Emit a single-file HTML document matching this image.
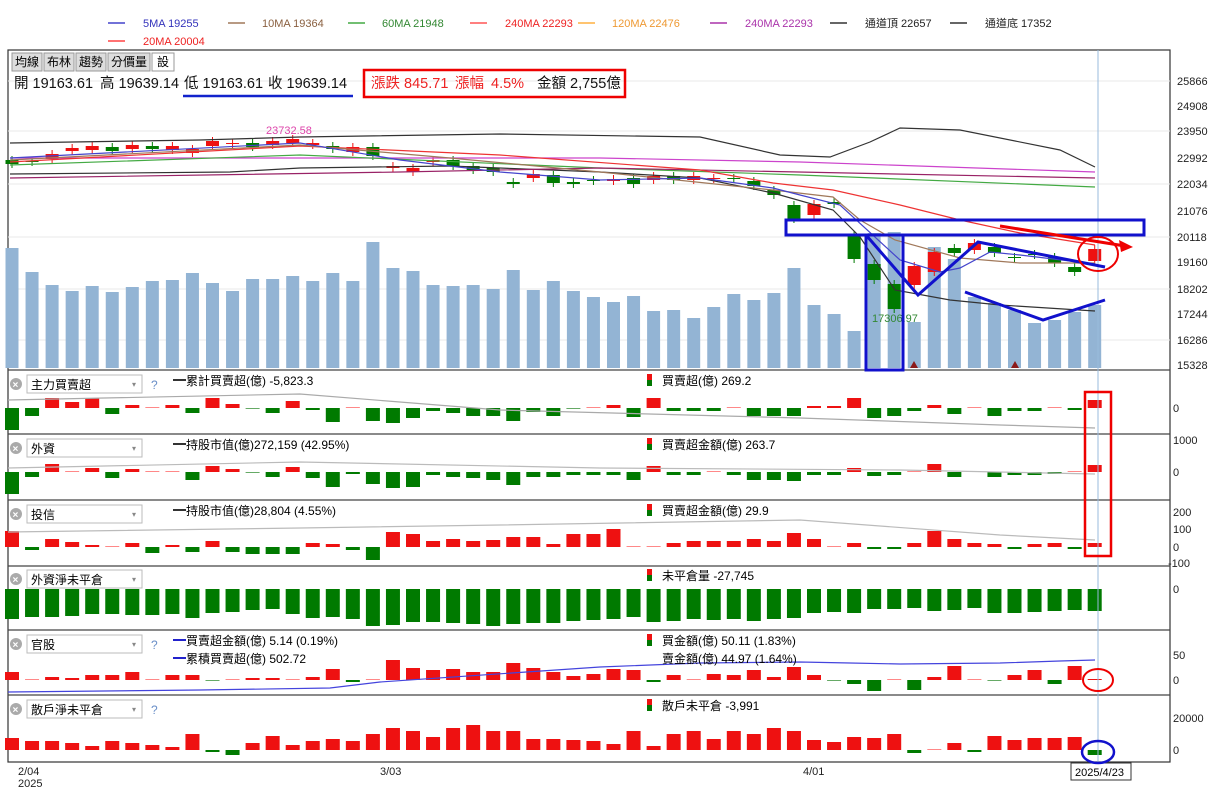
<!DOCTYPE html>
<html><head><meta charset="utf-8"><style>
body{margin:0;background:#fff;width:1229px;height:787px;overflow:hidden;font-family:"Liberation Sans","Noto Sans CJK TC",sans-serif;}
svg text{font-family:"Liberation Sans","Noto Sans CJK TC",sans-serif;}
</style></head><body>
<svg id="s" width="1229" height="787" xmlns="http://www.w3.org/2000/svg" font-size="12">
<!-- legend -->
<g font-size="11">
<line x1="108" y1="23" x2="125" y2="23" stroke="#4444cc" stroke-width="1.5"/><text x="143" y="27" fill="#3333bb">5MA 19255</text>
<line x1="228" y1="23" x2="245" y2="23" stroke="#a0785a" stroke-width="1.5"/><text x="262" y="27" fill="#8a6040">10MA 19364</text>
<line x1="348" y1="23" x2="365" y2="23" stroke="#44aa44" stroke-width="1.5"/><text x="382" y="27" fill="#338833">60MA 21948</text>
<line x1="470" y1="23" x2="487" y2="23" stroke="#ff5555" stroke-width="1.5"/><text x="505" y="27" fill="#ee2222">240MA 22293</text>
<line x1="578" y1="23" x2="595" y2="23" stroke="#ffb040" stroke-width="1.5"/><text x="612" y="27" fill="#ee9933">120MA 22476</text>
<line x1="710" y1="23" x2="727" y2="23" stroke="#aa33aa" stroke-width="1.5"/><text x="745" y="27" fill="#aa33aa">240MA 22293</text>
<line x1="830" y1="23" x2="847" y2="23" stroke="#333" stroke-width="1.5"/><text x="865" y="27" fill="#222">通道頂 22657</text>
<line x1="950" y1="23" x2="967" y2="23" stroke="#333" stroke-width="1.5"/><text x="985" y="27" fill="#222">通道底 17352</text>
<line x1="108" y1="41" x2="125" y2="41" stroke="#ff4444" stroke-width="1.5"/><text x="143" y="45" fill="#ee2222">20MA 20004</text>
</g>
<!-- frame -->
<rect x="8" y="50" width="1162" height="712" fill="none" stroke="#333" stroke-width="1.2"/>
<g stroke="#444" stroke-width="1.2">
<line x1="8" y1="370" x2="1170" y2="370"/><line x1="8" y1="434" x2="1170" y2="434"/><line x1="8" y1="500" x2="1170" y2="500"/><line x1="8" y1="566" x2="1170" y2="566"/><line x1="8" y1="630" x2="1170" y2="630"/><line x1="8" y1="695" x2="1170" y2="695"/>
</g>
<g stroke="#e8e8e8" stroke-width="1">
<line x1="8" y1="81" x2="1170" y2="81"/><line x1="8" y1="131" x2="1170" y2="131"/><line x1="8" y1="184" x2="1170" y2="184"/><line x1="8" y1="237" x2="1170" y2="237"/><line x1="8" y1="289" x2="1170" y2="289"/><line x1="8" y1="340" x2="1170" y2="340"/>
</g>
<g id="bars"></g>
<g id="lines" fill="none" stroke-width="1.2">
<polyline stroke="#333" points="10,143 200,140 300,137 500,134 700,137 780,155 830,157 870,142 900,128 960,130 1060,150 1095,167"/>
<polyline stroke="#333" points="10,174 230,172 300,168 450,166 600,172 700,178 773,193 833,210 860,237 895,290 950,300 1000,305 1095,311"/>
<polyline stroke="#cc44cc" points="10,158 600,158 800,162 1095,172"/>
<polyline stroke="#44aa44" points="10,165 300,155 600,168 800,175 1095,187"/>
<polyline stroke="#992266" points="10,178 400,172 600,168 1095,178"/>
<polyline stroke="#ee3333" points="10,162 300,146 500,155 700,170 773,183 833,190 900,205 960,220 1020,233 1095,245"/>
<polyline stroke="#a0785a" points="10,160 300,145 450,158 600,172 773,190 833,197 860,220 895,240 960,258 1020,263 1095,263"/>
<polyline stroke="#4444cc" points="10,158 300,143 400,160 500,172 600,180 700,178 773,188 800,195 840,205 900,260 940,272 960,268 990,252 1020,255 1095,264"/>
<polyline stroke="#aaa" points="8,400 300,394 500,410 800,418 1000,425 1095,428"/>
<polyline stroke="#bbb" points="8,468 300,462 600,468 900,470 1095,474"/>
<polyline stroke="#bbb" points="8,532 300,528 500,525 800,520 1000,535 1095,540"/>
<polyline stroke="#4444dd" points="8,692 200,690 330,688 380,682 600,667 700,663 800,662 850,663 900,664 1000,663 1060,661 1095,660"/>
</g>
<line x1="1098" y1="50" x2="1098" y2="770" stroke="#99bbdd" stroke-width="1"/>
<text x="266" y="134" fill="#dd44aa" font-size="11">23732.58</text>
<text x="872" y="322" fill="#338833" font-size="11">17306.97</text>
<polygon points="910,368 914,361 918,368" fill="#8b1a1a"/><polygon points="1011,368 1015,361 1019,368" fill="#8b1a1a"/>
<!-- axis -->
<g font-size="11" fill="#222">
<text x="1177" y="85">25866</text><text x="1177" y="110">24908</text><text x="1177" y="135">23950</text><text x="1177" y="162">22992</text><text x="1177" y="188">22034</text><text x="1177" y="215">21076</text><text x="1177" y="241">20118</text><text x="1177" y="266">19160</text><text x="1177" y="293">18202</text><text x="1177" y="318">17244</text><text x="1177" y="344">16286</text><text x="1177" y="369">15328</text>
<text x="1173" y="412">0</text><text x="1173" y="444">1000</text><text x="1173" y="476">0</text>
<text x="1173" y="516">200</text><text x="1173" y="533">100</text><text x="1173" y="551">0</text><text x="1168" y="567">-100</text>
<text x="1173" y="593">0</text><text x="1173" y="659">50</text><text x="1173" y="684">0</text><text x="1173" y="722">20000</text><text x="1173" y="754">0</text>
<text x="18" y="775">2/04</text><text x="18" y="787">2025</text><text x="380" y="775">3/03</text><text x="803" y="775">4/01</text>
</g>
<rect x="1071" y="763" width="60" height="17" fill="#fff" stroke="#333"/><text x="1075" y="776" font-size="11">2025/4/23</text>
<!-- toolbar -->
<g font-size="12">
<rect x="12" y="53" width="30" height="18" fill="#ddd" stroke="#999"/><text x="15" y="66">均線</text>
<rect x="44" y="53" width="30" height="18" fill="#ddd" stroke="#999"/><text x="47" y="66">布林</text>
<rect x="76" y="53" width="30" height="18" fill="#ddd" stroke="#999"/><text x="79" y="66">趨勢</text>
<rect x="108" y="53" width="42" height="18" fill="#ddd" stroke="#999"/><text x="111" y="66">分價量</text>
<rect x="152" y="53" width="22" height="18" fill="#fff" stroke="#999"/><text x="157" y="66">設</text>
</g>
<g font-size="14.5" fill="#111">
<text x="14" y="88">開 19163.61</text><text x="100" y="88">高 19639.14</text><text x="184" y="88">低 19163.61</text><text x="268" y="88">收 19639.14</text>
<text x="371" y="88" fill="#e22">漲跌 845.71</text><text x="455" y="88" fill="#e22">漲幅</text><text x="491" y="88" fill="#e22">4.5%</text><text x="537" y="88">金額 2,755億</text>
</g>
<line x1="183" y1="96" x2="353" y2="96" stroke="#1122cc" stroke-width="2.5"/>
<rect x="364" y="70" width="261" height="27" fill="none" stroke="#e00" stroke-width="2.5"/>
<g id="ctl"></g>
<!-- annotations -->
<g fill="none" stroke-width="3">
<rect x="786" y="220" width="358" height="15" stroke="#1111cc"/>
<rect x="866" y="235" width="37" height="135" stroke="#1111cc"/>
<polyline stroke="#1111cc" points="866,235 918,295 978,242 1105,267"/>
<polyline stroke="#1111cc" points="965,292 1043,320 1105,300"/>
<polyline stroke="#e00" points="1000,226 1125,246"/>
<ellipse cx="1098" cy="254" rx="20" ry="17" stroke="#e00" stroke-width="2"/>
<rect x="1085" y="392" width="26" height="164" stroke="#e00" stroke-width="2.5"/>
<ellipse cx="1098" cy="680" rx="15" ry="11" stroke="#e00" stroke-width="2"/>
<ellipse cx="1098" cy="752" rx="16" ry="11" stroke="#1111cc" stroke-width="2.5"/>
</g>
<polygon points="1133,247 1119,240 1121,252" fill="#e00"/>
</svg>
<script>
var NS="http://www.w3.org/2000/svg",B=document.getElementById('bars');
function R(x,y,w,h,f,p){var r=document.createElementNS(NS,'rect');r.setAttribute('x',x);r.setAttribute('y',y);r.setAttribute('width',w);r.setAttribute('height',Math.max(h,1));r.setAttribute('fill',f);(p||B).appendChild(r);}
function cx(i){return 12+i*20.05;}
var vol=[248,272,285,291,286,292,287,281,280,273,283,291,279,279,276,281,273,281,242,268,271,285,286,285,289,270,290,281,291,297,302,296,311,310,318,307,294,300,293,268,305,314,331,233,232,322,247,259,297,303,310,323,320,312,305];
vol.forEach(function(t,i){R(cx(i)-6.5,t,13,368-t,'#93b4d4');});
var G='#007a00',Rd='#ee1111';
var cd=[[160,164,G],[161,162,G],[154,159,Rd],[148,151,Rd],[146,150,Rd],[147,151,G],[145,149,Rd],[146,149,G],[146,150,Rd],[149,153,Rd],[141,146,Rd],[143,144,Rd],[143,147,G],[141,145,Rd],[139,143,Rd],[143,145,Rd],[146,149,G],[147,152,Rd],[147,156,G],[166,168,Rd],[168,172,Rd],[160,162,Rd],[160,166,G],[166,170,G],[168,172,G],[182,184,G],[174,178,Rd],[175,183,G],[182,184,G],[180,181,G],[179,181,Rd],[178,184,G],[176,180,Rd],[176,180,G],[176,180,Rd],[178,179,Rd],[178,179,G],[181,186,G],[190,195,G],[205,219,G],[204,215,Rd],[202,204,G],[235,259,G],[264,280,G],[284,309,G],[266,285,Rd],[252,272,Rd],[248,253,G],[243,250,Rd],[247,253,G],[257,258,G],[254,255,G],[257,263,G],[267,272,G],[249,261,Rd]];
cd.forEach(function(c,i){var x=cx(i);R(x-0.5,c[0]-4,1,c[1]-c[0]+8,c[2]);R(x-6.5,c[0],13,c[1]-c[0],c[2]);});
function panel(z,v){v.forEach(function(h,i){var x=cx(i)-7;if(h>=0)R(x,z-Math.max(h,1),14,Math.max(h,1),h<1?'#f88':Rd);else R(x,z,14,-h,h>-1?'#6a6':G);});}
panel(408,[-22,-8,10,6,10,-6,3,0.5,3,-5,10,4,-0.5,-5,7,-2,-14,0.5,-13,-15,-10,-3,-5,-8,-8,-13,-4,-8,-0.5,0.5,3,-9,10,-3,-3,-3,0.5,-8,-8,-8,2,2,10,-10,-8,-3,3,-6,0.5,-8,-3,-3,0.5,-2,8]);
panel(472,[-22,-5,8,0.5,4,-6,3,0.5,0.5,-8,6,3,-0.5,-5,5,-6,-15,-2,-12,-16,-15,-3,-5,-6,-8,-13,-5,-5,-3,-3,-3,-8,6,-3,-3,0.5,-3,-8,-8,-9,-3,-3,4,-4,-3,0.5,8,-5,0.5,-5,-3,-3,-2,0.5,7]);
panel(547,[16,-3,8,5,2,0.5,4,-6,2,-5,6,-5,-7,-7,-7,4,3,-3,-13,15,13,6,8,6,7,10,10,3,13,13,18,0.5,0.5,4,6,6,6,8,6,14,8,0.5,4,-2,-2,4,16,8,4,3,-2,3,4,-2,4]);
panel(589,[-30,-28,-28,-27,-25,-25,-26,-26,-25,-29,-24,-23,-21,-20,-25,-29,-28,-30,-37,-36,-33,-33,-34,-35,-37,-35,-34,-34,-32,-31,-30,-28,-33,-32,-30,-31,-30,-32,-30,-29,-24,-23,-24,-20,-20,-19,-22,-21,-19,-24,-24,-23,-22,-21,-22]);
panel(680,[8,0.5,3,2,5,5,8,0.5,5,5,-0.5,0.5,2,2,0.5,3,11,-2,0.5,20,12,10,11,8,8,17,12,8,4,6,11,10,-2,5,0.5,6,5,10,3,13,5,-0.5,-4,-11,0.5,-10,3,14,0.5,-0.5,5,10,-4,14,1]);
panel(750,[12,9,9,7,4,9,7,5,3,16,-2,-5,7,14,5,9,11,9,16,22,19,13,22,25,19,19,11,11,10,9,6,19,4,16,19,11,19,16,22,19,10,8,13,12,16,-3,0.5,7,-2,14,10,12,12,13,-5]);
var C=document.getElementById('ctl'),pl=[[375,'主力買賣超','累計買賣超(億) -5,823.3','買賣超(億) 269.2',1],[439,'外資','持股市值(億)272,159 (42.95%)','買賣超金額(億) 263.7',0],[505,'投信','持股市值(億)28,804 (4.55%)','買賣超金額(億) 29.9',0],[570,'外資淨未平倉','','未平倉量 -27,745',0],[635,'官股','買賣超金額(億) 5.14 (0.19%)','買金額(億) 50.11 (1.83%)',1],[700,'散戶淨未平倉','','散戶未平倉 -3,991',1]];
var h='';pl.forEach(function(p){var y=p[0];
h+='<circle cx="16" cy="'+(y+9)+'" r="6" fill="#aaa"/><text x="12.5" y="'+(y+13)+'" fill="#fff" font-size="10" font-weight="bold">×</text>';
h+='<rect x="27" y="'+y+'" width="115" height="18" fill="#fff" stroke="#bbb"/><text x="31" y="'+(y+14)+'">'+p[1]+'</text><text x="132" y="'+(y+12)+'" fill="#888" font-size="8">▾</text>';
if(p[4])h+='<text x="151" y="'+(y+14)+'" fill="#6a8fc8">?</text>';
if(p[2]){var lc=(y==635)?'#2222cc':'#333';h+='<line x1="173" y1="'+(y+5)+'" x2="186" y2="'+(y+5)+'" stroke="'+lc+'" stroke-width="2"/><text x="186" y="'+(y+10)+'">'+p[2]+'</text>';}
h+='<rect x="647" y="'+(y-1)+'" width="5" height="6" fill="#e11"/><rect x="647" y="'+(y+5)+'" width="5" height="6" fill="#070"/><text x="662" y="'+(y+10)+'">'+p[3]+'</text>';});
h+='<line x1="173" y1="658" x2="186" y2="658" stroke="#2222cc" stroke-width="2"/><text x="186" y="663">累積買賣超(億) 502.72</text><text x="662" y="663">賣金額(億) 44.97 (1.64%)</text>';
C.innerHTML=h;
</script>
</body></html>
